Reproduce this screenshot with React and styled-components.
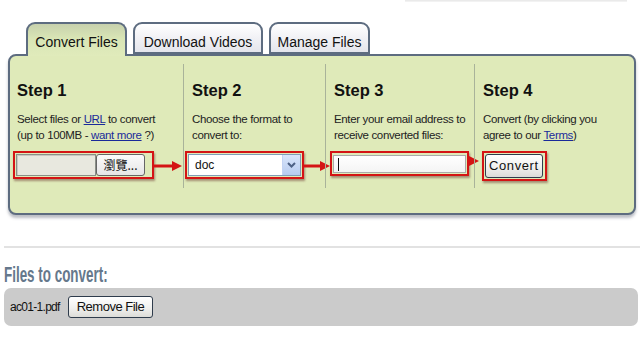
import React from "react";
import styled, { createGlobalStyle } from "styled-components";

const GlobalStyle = createGlobalStyle`
  html, body {
    margin: 0;
    padding: 0;
    background: #ffffff;
    font-family: "Liberation Sans", Arial, sans-serif;
  }
`;

const Page = styled.div`
  width: 640px;
  height: 357px;
  overflow: hidden;
  background: #fff;
`;

const TopRule = styled.div`
  margin-left: 405px;
  width: 222px;
  height: 2px;
  background: linear-gradient(#e6e6e6, #f6f6f6);
  margin-bottom: 20px;
`;

const TabBar = styled.div`
  display: flex;
  gap: 6px;
  padding-left: 26px;
  height: 32px;
  position: relative;
  z-index: 2;
`;

const Tab = styled.div`
  box-sizing: border-box;
  width: ${(p) => p.$w}px;
  height: ${(p) => (p.$active ? 34 : 32)}px;
  border: 2px solid #5d6c80;
  border-bottom: ${(p) => (p.$active ? "none" : "2px solid #5d6c80")};
  border-radius: 9px 9px 0 0;
  background: ${(p) =>
    p.$active
      ? "linear-gradient(#c7d1ad, #d9e5b5 45%, #e0ebbb)"
      : "linear-gradient(#ffffff, #f1f1f5 50%, #e4e5ec)"};
  display: flex;
  justify-content: center;
  padding-top: 10px;
  font-size: 14px;
  color: #111;
`;

const Panel = styled.div`
  position: relative;
  z-index: 1;
  margin: 0 4px 0 8px;
  height: 161px;
  box-sizing: border-box;
  border: 2px solid #5d6c80;
  border-radius: 8px;
  background: #dfeab9;
  box-shadow: 0 3px 3px rgba(60, 70, 90, 0.35);
  padding: 8px 0 0 0;
  display: grid;
  grid-template-columns: 173px 142px 149px 1fr;
  align-items: start;
`;

const Step = styled.div`
  position: relative;
  height: 124px;
  box-sizing: border-box;
  padding: 16px 0 0 ${(p) => (p.$first ? 7 : 8)}px;
  border-left: ${(p) => (p.$first ? "none" : "1px solid #a9b39a")};
`;

const StepTitle = styled.div`
  font-size: 16.5px;
  line-height: 20px;
  font-weight: bold;
  color: #111;
  margin-bottom: 11px;
`;

const StepText = styled.div`
  font-size: 11.5px;
  line-height: 16px;
  height: 32px;
  color: #222;
  white-space: nowrap;
  letter-spacing: -0.35px;
  margin-bottom: 8px;

  a {
    color: #1a2a9a;
    text-decoration: underline;
  }
`;

const Controls = styled.div`
  position: relative;
  display: flex;
  margin-left: ${(p) => p.$shift}px;
`;

const RedBox = styled.div`
  position: relative;
  box-sizing: border-box;
  width: ${(p) => p.$w}px;
  height: ${(p) => p.$h || 28}px;
  border: 2px solid #d41414;
  box-shadow: 1px 2px 2px rgba(90, 30, 30, 0.45);
  padding: 1px;
  display: flex;
  align-items: center;
`;

const Arrow = styled.svg`
  position: absolute;
  left: 100%;
  top: ${(p) => p.$top}px;
  overflow: visible;
`;

const FileField = styled.div`
  width: 80px;
  height: 22px;
  box-sizing: border-box;
  border: 1px solid #8a8f88;
  background: #e8e8df;
  box-shadow: inset 1px 1px 0 #c8c8c0;
`;

const Browse = styled.div`
  width: 49px;
  height: 22px;
  box-sizing: border-box;
  border: 1px solid #666;
  border-radius: 3px;
  background: linear-gradient(#fbfbfb, #e6e6e6);
  font-family: "Noto Sans CJK TC", "Liberation Sans", sans-serif;
  font-size: 12px;
  line-height: 20px;
  text-align: center;
  color: #111;
`;

const Select = styled.div`
  flex: 1;
  height: 22px;
  box-sizing: border-box;
  border: 1px solid #7f9db9;
  background: #fff;
  display: flex;
  align-items: center;
  padding-left: 6px;
  font-size: 12px;
  color: #111;
`;

const SelectValue = styled.span`
  flex: 1;
`;

const DropButton = styled.div`
  width: 17px;
  height: 20px;
  background: linear-gradient(#d9e6fb, #b7cbef);
  border-left: 1px solid #c3d3f3;
  display: flex;
  align-items: center;
  justify-content: center;
`;

const EmailInput = styled.div`
  flex: 1;
  height: 18px;
  box-sizing: border-box;
  border: 1px solid #aaa;
  background: linear-gradient(#ffffff, #f4f4f4);
  padding: 2px 0 0 4px;
`;

const Caret = styled.div`
  width: 1px;
  height: 13px;
  background: #111;
`;

const Button = styled.div`
  box-sizing: border-box;
  height: ${(p) => p.$h}px;
  padding: 0 ${(p) => p.$px}px;
  border: 1px solid #2f3c4c;
  border-radius: 3px;
  background: linear-gradient(#ffffff, #f0f0ee 55%, #dcdcd8);
  font-size: 13px;
  line-height: ${(p) => p.$h - 2}px;
  letter-spacing: ${(p) => p.$ls || 0}px;
  color: #111;
  white-space: nowrap;
  flex-shrink: 0;
`;

const Divider = styled.div`
  margin: 31px 0 0 4px;
  height: 2px;
  background: #e2e2e2;
`;

const FilesTitle = styled.div`
  margin: 14px 0 0 4px;
  font-size: 22px;
  line-height: 25px;
  font-weight: bold;
  color: #65788c;
  display: inline-block;
  transform: scaleX(0.61);
  transform-origin: left center;
  white-space: nowrap;
`;

const FileList = styled.div`
  margin: 1px 2px 0 4px;
  height: 38px;
  border-radius: 7px;
  background: #cbcbcb;
  display: flex;
  align-items: center;
  gap: 8px;
  padding-left: 6px;
`;

const FileName = styled.span`
  font-size: 12px;
  color: #111;
  letter-spacing: -0.7px;
`;

const ArrowIcon = ({ len, top }) => (
  <Arrow $top={top} width={len} height="12" viewBox={`0 0 ${len} 12`}>
    <line x1="0" y1="6" x2={len - 8} y2="6" stroke="#d41414" strokeWidth="3" />
    <polygon points={`${len - 10},1 ${len},6 ${len - 10},11`} fill="#d41414" />
  </Arrow>
);

export default function App() {
  return (
    <Page>
      <GlobalStyle />
      <TopRule />
      <TabBar>
        <Tab $w={101} $active>Convert Files</Tab>
        <Tab $w={130}>Download Videos</Tab>
        <Tab $w={101}>Manage Files</Tab>
      </TabBar>
      <Panel>
        <Step $first>
          <StepTitle>Step 1</StepTitle>
          <StepText>
            Select files or <a>URL</a> to convert
            <br />
            (up to 100MB - <a>want more</a> ?)
          </StepText>
          <Controls $shift={-4}>
            <RedBox $w={141}>
              <FileField />
              <Browse>瀏覽...</Browse>
              <ArrowIcon len={30} top={7} />
            </RedBox>
          </Controls>
        </Step>
        <Step>
          <StepTitle>Step 2</StepTitle>
          <StepText>
            Choose the format to
            <br />
            convert to:
          </StepText>
          <Controls $shift={-7}>
            <RedBox $w={119}>
              <Select>
                <SelectValue>doc</SelectValue>
                <DropButton>
                  <svg width="9" height="6" viewBox="0 0 9 6">
                    <path d="M1 1 L4.5 4.5 L8 1" stroke="#4d6185" strokeWidth="2" fill="none" />
                  </svg>
                </DropButton>
              </Select>
              <ArrowIcon len={28} top={7} />
            </RedBox>
          </Controls>
        </Step>
        <Step>
          <StepTitle>Step 3</StepTitle>
          <StepText>
            Enter your email address to
            <br />
            receive converted files:
          </StepText>
          <Controls $shift={-4}>
            <RedBox $w={139} $h={25}>
              <EmailInput>
                <Caret />
              </EmailInput>
              <ArrowIcon len={12} top={2} />
            </RedBox>
          </Controls>
        </Step>
        <Step>
          <StepTitle>Step 4</StepTitle>
          <StepText>
            Convert (by clicking you
            <br />
            agree to our <a>Terms</a>)
          </StepText>
          <Controls $shift={-1}>
            <RedBox $w={65} $h={30}>
              <Button $h={24} $px={3} $ls={0.6}>Convert</Button>
            </RedBox>
          </Controls>
        </Step>
      </Panel>
      <Divider />
      <FilesTitle>Files to convert:</FilesTitle>
      <FileList>
        <FileName>ac01-1.pdf</FileName>
        <Button $h={22} $px={8} $ls={-0.5}>Remove File</Button>
      </FileList>
    </Page>
  );
}
